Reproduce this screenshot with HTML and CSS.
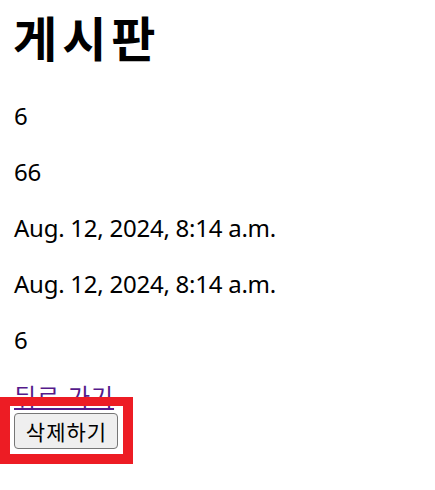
FILE: index.html
```html
<!DOCTYPE html>
<html lang="ko">
<head>
<meta charset="utf-8">
<title>게시판</title>
<link rel="stylesheet" href="styles.css">
</head>
<body>
<h1 class="title">게시판</h1>
<p class="field">6</p>
<p class="field">66</p>
<p class="field">Aug. 12, 2024, 8:14 a.m.</p>
<p class="field">Aug. 12, 2024, 8:14 a.m.</p>
<p class="field">6</p>
<a class="back" href="#">뒤로 가기</a>
<form class="delete-form">
<button class="delete-btn" type="submit">삭제하기</button>
</form>
<div class="highlight"></div>
</body>
</html>
```
FILE: styles.css
```css
html, body {
  background: #ffffff;
}
body {
  margin: 0;
  min-height: 490px;
  box-sizing: border-box;
  padding: 4px 12px 4px 14px;
  position: relative;
  font-family: "Noto Sans", "Noto Sans CJK KR", sans-serif;
  font-size: 24px;
  color: #000000;
}
.title {
  margin: 0 0 32px -1px;
  font-size: 48px;
  line-height: 64px;
  font-weight: bold;
  letter-spacing: 5px;
  font-family: "Noto Sans CJK KR", sans-serif;
}
.field {
  margin: 24px 0;
  line-height: 32px;
  letter-spacing: -0.25px;
}
.back {
  display: inline-block;
  line-height: 30px;
  letter-spacing: 1px;
  color: #551a8b;
  font-family: "Noto Sans CJK KR", sans-serif;
  text-decoration: underline;
}
.delete-form {
  margin: 0;
}
.delete-btn {
  margin: 0;
  height: 36px;
  width: 104px;
  padding: 0;
  font-family: "Noto Sans CJK KR", sans-serif;
  font-size: 21px;
  letter-spacing: 1px;
  text-indent: 1px;
  color: #000000;
  background: #efefef;
  border: 1.5px solid #767676;
  border-radius: 4px;
}
.highlight {
  position: absolute;
  left: 0;
  top: 397px;
  width: 133px;
  height: 67px;
  box-sizing: border-box;
  border: 10px solid #ed1c24;
  border-top-width: 9px;
  pointer-events: none;
}
```
